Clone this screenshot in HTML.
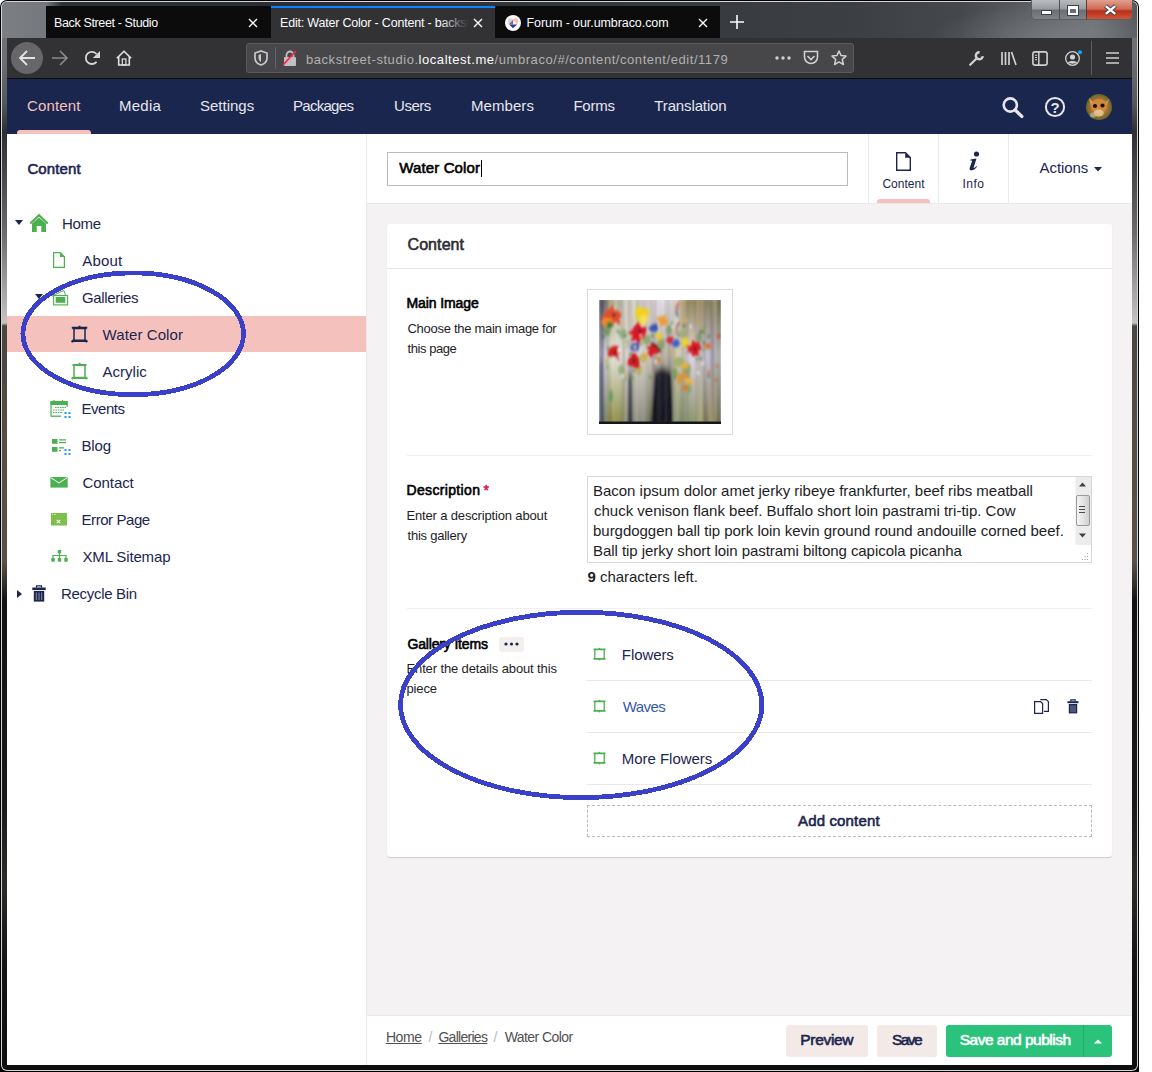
<!DOCTYPE html>
<html><head><meta charset="utf-8">
<style>
html,body{margin:0;padding:0;}
body{width:1152px;height:1072px;position:relative;overflow:hidden;background:#ffffff;font-family:"Liberation Sans",sans-serif;}
.a{position:absolute;}
.t{position:absolute;white-space:nowrap;line-height:1;font-family:"Liberation Sans",sans-serif;}
svg{position:absolute;overflow:visible;}
</style></head><body>
<!-- window frame -->
<div class="a" style="left:0;top:0;width:1139px;height:1072px;background:#000;border-radius:7px 7px 0 0;"></div>
<div class="a" style="left:1px;top:1px;width:1137px;height:1070px;background:#d4d5d8;border-radius:6px 6px 6px 6px;"></div>
<div class="a" style="left:2px;top:2px;width:1135px;height:1068px;border-radius:5px;background:linear-gradient(to bottom,#75787c 0,#6a6d71 60px,#55585c 100px,#2e2f33 130px,#6a6a6c 230px,#c4c4c4 321px,#4a4540 324px,#564d45 440px,#5a5048 560px,#121212 600px,#1a1918 800px,#2e2b27 880px,#141414 960px,#0e0e0e 1068px);"></div>
<!-- titlebar gradient -->
<div class="a" style="left:2px;top:2px;width:1135px;height:36px;border-radius:5px 5px 0 0;background:linear-gradient(to right,#7b7e82 0,#75787c 44px,#2c3037 60px,#2a2d33 300px,#383b40 720px,#3c3f44 850px,#45484c 960px,#5a5d61 1030px,#6c6f73 1090px,#55585c 1135px);"></div>
<div class="a" style="left:900px;top:2px;width:237px;height:36px;background:radial-gradient(ellipse 120px 40px at 150px 40px,rgba(150,152,156,0.45),rgba(150,152,156,0) 100%);"></div>
<!-- window buttons -->
<div class="a" style="left:1031px;top:0;width:102px;height:20px;border:1px solid #5b5e62;border-top:none;border-radius:0 0 5px 5px;box-sizing:border-box;background:linear-gradient(to bottom,#b9bbbf 0,#9a9da1 45%,#6c6f74 55%,#7f8286 100%);overflow:hidden;">
  <div class="a" style="left:27px;top:0;width:1px;height:20px;background:#4e5155;"></div>
  <div class="a" style="left:54px;top:0;width:47px;height:20px;background:linear-gradient(to bottom,#e0a090 0,#cf6a52 45%,#b7301a 55%,#d45a3c 100%);"></div>
  <div class="a" style="left:54px;top:0;width:1px;height:20px;background:#5a3a34;"></div>
</div>
<div class="a" style="left:1041px;top:10px;width:9px;height:3px;background:#fff;border:1px solid #3e4148;"></div>
<div class="a" style="left:1068px;top:6px;width:6px;height:4px;border:2px solid #fff;border-top-width:3px;outline:1px solid #3e4148;background:#6a6d72;"></div>
<svg style="left:1104px;top:5px" width="13" height="10" viewBox="0 0 13 10"><path d="M1.5 0.8 L11.5 9.2 M11.5 0.8 L1.5 9.2" stroke="#3e4148" stroke-width="4.2"/><path d="M1.8 1.1 L11.2 8.9 M11.2 1.1 L1.8 8.9" stroke="#fff" stroke-width="2.4"/></svg>

<!-- tab strip -->
<div class="a" style="left:46px;top:6px;width:674px;height:32px;background:#0c0c0d;"></div>
<div class="a" style="left:271px;top:6px;width:224px;height:32px;background:#323234;"></div>
<div class="a" style="left:271px;top:6px;width:224px;height:2px;background:#0a84ff;"></div>
<svg style="left:248px;top:18px" width="10" height="10" viewBox="0 0 10 10"><path d="M1 1L9 9M9 1L1 9" stroke="#fbfbfe" stroke-width="1.4"/></svg>
<svg style="left:473px;top:18px" width="10" height="10" viewBox="0 0 10 10"><path d="M1 1L9 9M9 1L1 9" stroke="#fbfbfe" stroke-width="1.4"/></svg>
<svg style="left:698px;top:18px" width="10" height="10" viewBox="0 0 10 10"><path d="M1 1L9 9M9 1L1 9" stroke="#fbfbfe" stroke-width="1.4"/></svg>
<svg style="left:730px;top:15px" width="14" height="14" viewBox="0 0 14 14"><path d="M7 0V14M0 7H14" stroke="#fbfbfe" stroke-width="1.6"/></svg>
<!-- forum favicon -->
<svg style="left:505px;top:15px" width="16" height="16" viewBox="0 0 16 16"><circle cx="8" cy="8" r="8" fill="#fbfbfe"/><circle cx="5.8" cy="6.5" r="3" fill="#d4d4d6"/><circle cx="10.3" cy="6.3" r="3" fill="#f4c4bc"/><path d="M4 9.2L8.2 4.8V9.2Z" fill="#8a6a4a"/><path d="M8.2 4.8L11.5 9.2H8.2Z" fill="#f4f4f8"/><path d="M4 9.4H12.2L8 13.2Z" fill="#2a3aa8"/></svg>

<!-- toolbar -->
<div class="a" style="left:7px;top:38px;width:1125px;height:40px;background:#323234;"></div>
<div class="a" style="left:7px;top:78px;width:1125px;height:1px;background:#0c0c0d;"></div>
<svg style="left:11px;top:42px" width="32" height="32" viewBox="0 0 32 32"><circle cx="16" cy="16" r="16" fill="#67676a"/><path d="M9 16H24M16 9L9 16L16 23" stroke="#e2e2e4" stroke-width="1.8" fill="none"/></svg>
<svg style="left:52px;top:50px" width="16" height="16" viewBox="0 0 16 16"><path d="M0 8H15M8 1L15 8L8 15" stroke="#8a8a8c" stroke-width="1.6" fill="none"/></svg>
<svg style="left:84px;top:50px" width="17" height="17" viewBox="0 0 17 17"><path d="M12.6 4A6.1 6.1 0 1 0 12.6 11.8" stroke="#d6d6d8" stroke-width="1.8" fill="none"/><path d="M16 0.9V8.1H8.8Z" fill="#d6d6d8"/></svg>
<svg style="left:116px;top:50px" width="16" height="16" viewBox="0 0 16 16"><path d="M0.8 8.3L8 1.2L15.2 8.3" stroke="#e2e2e4" stroke-width="1.6" fill="none" stroke-linejoin="round"/><path d="M2.7 6.5V15H13.3V6.5" stroke="#e2e2e4" stroke-width="1.6" fill="none"/><rect x="6.3" y="9" width="3.6" height="6" stroke="#e2e2e4" stroke-width="1.2" fill="none"/></svg>
<!-- url bar -->
<div class="a" style="left:246px;top:43px;width:608px;height:30px;background:#474749;border:1px solid #5b5b5d;box-sizing:border-box;border-radius:3px;"></div>
<svg style="left:254px;top:50px" width="14" height="16" viewBox="0 0 14 16"><path d="M7 1L13 3V8C13 11.5 10 14 7 15C4 14 1 11.5 1 8V3Z" stroke="#c8c8ca" stroke-width="1.7" fill="none"/><path d="M7 4V12C5.5 11 4.5 9.5 4.5 8V5Z" fill="#c8c8ca"/></svg>
<div class="a" style="left:275px;top:47px;width:1px;height:22px;background:#5a6577;"></div>
<svg style="left:283px;top:50px" width="16" height="16" viewBox="0 0 16 16"><rect x="1" y="7" width="12" height="9" rx="1" fill="#c0c0c2"/><path d="M3.5 7V5A3.5 3.5 0 0 1 10.5 5V7" stroke="#c0c0c2" stroke-width="1.8" fill="none"/><path d="M0 15L13 1" stroke="#ff1f4b" stroke-width="1.8"/></svg>
<svg style="left:775px;top:55px" width="16" height="6" viewBox="0 0 16 6"><circle cx="2" cy="3" r="1.7" fill="#d0d0d2"/><circle cx="8" cy="3" r="1.7" fill="#d0d0d2"/><circle cx="14" cy="3" r="1.7" fill="#d0d0d2"/></svg>
<svg style="left:803px;top:50px" width="16" height="16" viewBox="0 0 16 16"><path d="M1.5 1.5H14.5V7A6.5 6.5 0 0 1 1.5 7Z" stroke="#d0d0d2" stroke-width="1.6" fill="none"/><path d="M4.5 6L8 9.5L11.5 6" stroke="#d0d0d2" stroke-width="1.6" fill="none"/></svg>
<svg style="left:831px;top:50px" width="16" height="16" viewBox="0 0 16 16"><path d="M8 1L10.1 5.6L15 6.1L11.3 9.4L12.4 14.5L8 11.9L3.6 14.5L4.7 9.4L1 6.1L5.9 5.6Z" stroke="#d0d0d2" stroke-width="1.5" fill="none" stroke-linejoin="round"/></svg>
<!-- right toolbar icons -->
<svg style="left:969px;top:51px" width="15" height="15" viewBox="0 0 15 15"><path d="M1.2 13.8L7.8 7.2" stroke="#d0d0d2" stroke-width="2.3" stroke-linecap="round"/><path d="M13.8 5.2A3.5 3.5 0 1 1 10.6 1.2" stroke="#d0d0d2" stroke-width="2.4" fill="none"/></svg>
<svg style="left:1001px;top:51px" width="16" height="15" viewBox="0 0 16 15"><path d="M1 1V14M4.5 1V14M8 1V14M10.5 1L15 14" stroke="#d0d0d2" stroke-width="1.7" fill="none"/></svg>
<svg style="left:1032px;top:51px" width="16" height="15" viewBox="0 0 16 15"><rect x="0.9" y="0.9" width="14.2" height="13.2" rx="2.2" stroke="#d0d0d2" stroke-width="1.6" fill="none"/><path d="M6.8 1V14" stroke="#d0d0d2" stroke-width="1.5"/><path d="M3 4.3H5M3 6.5H5M3 8.7H5" stroke="#d0d0d2" stroke-width="1"/></svg>
<svg style="left:1065px;top:51px" width="17" height="15" viewBox="0 0 17 15"><circle cx="7.5" cy="7.5" r="6.8" stroke="#d0d0d2" stroke-width="1.3" fill="none"/><circle cx="7.5" cy="6" r="2.6" fill="#d0d0d2"/><path d="M3 11.5C4 9.5 11 9.5 12 11.5C11 13 4 13 3 11.5Z" fill="#d0d0d2"/><circle cx="15" cy="1.2" r="2" fill="#0ea7ff"/></svg>
<div class="a" style="left:1091px;top:41px;width:1px;height:34px;background:#5e5e60;"></div>
<svg style="left:1106px;top:52px" width="13" height="12" viewBox="0 0 13 12"><path d="M0 1H13M0 6H13M0 11H13" stroke="#d0d0d2" stroke-width="1.7"/></svg>

<!-- umbraco header -->
<div class="a" style="left:7px;top:79px;width:1125px;height:55px;background:#1b264f;"></div>
<div class="a" style="left:17px;top:130px;width:74px;height:4px;background:#f5c1bc;border-radius:3px 3px 0 0;"></div>
<svg style="left:1002px;top:97px" width="22" height="21" viewBox="0 0 22 21"><circle cx="8.3" cy="8" r="6.6" stroke="#e6e6ec" stroke-width="2.6" fill="none"/><path d="M13.2 13L19.8 19.4" stroke="#e6e6ec" stroke-width="3.4" stroke-linecap="round"/></svg>
<svg style="left:1044px;top:97px" width="22" height="21" viewBox="0 0 22 21"><circle cx="11" cy="10" r="9.1" stroke="#e6e6ec" stroke-width="2" fill="none"/><text x="11" y="15.5" text-anchor="middle" font-family="Liberation Sans" font-weight="700" font-size="15" fill="#e6e6ec">?</text></svg>
<svg style="left:1086px;top:94px" width="26" height="26" viewBox="0 0 26 26"><defs><radialGradient id="av" cx="50%" cy="50%" r="55%"><stop offset="0" stop-color="#d89040"/><stop offset="0.55" stop-color="#b87030"/><stop offset="0.85" stop-color="#6a6a30"/><stop offset="1" stop-color="#4a6a30"/></radialGradient><filter id="avb"><feGaussianBlur stdDeviation="0.6"/></filter></defs><circle cx="13" cy="13" r="13" fill="url(#av)"/><g filter="url(#avb)"><path d="M3 4 L8 9 L5 12Z" fill="#e0a050"/><path d="M23 5 L18 9 L21 12Z" fill="#d09040"/><ellipse cx="13" cy="12" rx="8" ry="7" fill="#d08a3c"/><circle cx="9" cy="12" r="2.1" fill="#1a1008"/><circle cx="16.5" cy="11.5" r="2.1" fill="#1a1008"/><ellipse cx="12.8" cy="19" rx="5" ry="3.5" fill="#e8d0a0" opacity=".8"/><ellipse cx="7" cy="21" rx="3" ry="2.5" fill="#c8b890" opacity=".7"/></g></svg>

<!-- sidebar -->
<div class="a" style="left:7px;top:134px;width:359px;height:931px;background:#fff;"></div>
<div class="a" style="left:366px;top:134px;width:1px;height:931px;background:#e9e9eb;"></div>
<div class="a" style="left:7px;top:316px;width:359px;height:36px;background:#f5c1bc;"></div>
<!-- tree carets -->
<svg style="left:15px;top:220px" width="8" height="5" viewBox="0 0 8 5"><path d="M0 0H8L4 5Z" fill="#1b264f"/></svg>
<svg style="left:35px;top:294px" width="8" height="5" viewBox="0 0 8 5"><path d="M0 0H8L4 5Z" fill="#1b264f"/></svg>
<svg style="left:16.5px;top:589.5px" width="5" height="8" viewBox="0 0 5 8"><path d="M0 0V8L5 4Z" fill="#1b264f"/></svg>
<!-- home icon -->
<svg style="left:29px;top:214px" width="20" height="18" viewBox="0 0 20 18"><path d="M1.2 9.5L10 1.2L18.8 9.5" stroke="#4caf50" stroke-width="2" fill="none"/><path d="M3 9.5L10 3.6L17 9.5V18H12.3V12H7.7V18H3Z" fill="#4caf50"/></svg>
<!-- about doc -->
<svg style="left:53px;top:252px" width="12" height="16" viewBox="0 0 12 16"><path d="M0.6 0.6H7.3L11.4 4.7V15.4H0.6Z" stroke="#4caf50" stroke-width="1.2" fill="none"/><path d="M7 0.6V5H11.4Z" fill="#4caf50"/></svg>
<!-- galleries folder -->
<svg style="left:51px;top:289px" width="18" height="17" viewBox="0 0 18 17"><path d="M1 7L9 3L13 1.5L14.5 6" stroke="#4caf50" stroke-width="1" fill="none"/><rect x="2.6" y="6.5" width="14" height="9.4" stroke="#4caf50" stroke-width="1.1" fill="#fff"/><rect x="4.7" y="8" width="9.6" height="5.8" fill="#4caf50"/></svg>
<!-- frame icons -->
<svg style="left:71px;top:325px" width="17" height="18" viewBox="0 0 17 18"><path d="M1.5 3H15.5M1.5 15.8H15.5" stroke="#1b264f" stroke-width="2.4"/><path d="M3 3V15.8M14 3V15.8" stroke="#1b264f" stroke-width="1.5"/><rect x="7.5" y="0.8" width="2" height="2" fill="#1b264f"/><circle cx="1.6" cy="16.2" r="1.3" fill="#1b264f"/><circle cx="15.4" cy="16.2" r="1.3" fill="#1b264f"/><circle cx="1.6" cy="2.8" r="1" fill="#1b264f"/><circle cx="15.4" cy="2.8" r="1" fill="#1b264f"/></svg>
<svg style="left:71px;top:362px" width="17" height="18" viewBox="0 0 17 18"><path d="M1.5 3H15.5M1.5 15.8H15.5" stroke="#4caf50" stroke-width="2.2"/><path d="M3 3V15.8M14 3V15.8" stroke="#4caf50" stroke-width="1.5"/><rect x="7.5" y="0.8" width="2" height="2" fill="#4caf50"/><circle cx="1.6" cy="16.2" r="1.2" fill="#4caf50"/><circle cx="15.4" cy="16.2" r="1.2" fill="#4caf50"/></svg>
<!-- events -->
<svg style="left:50px;top:400px" width="22" height="19" viewBox="0 0 22 19"><rect x="0.5" y="1" width="17" height="4" fill="#4caf50"/><path d="M1 1V16.5M17.2 1V7" stroke="#4caf50" stroke-width="1.2"/><path d="M1 16.2H11" stroke="#4caf50" stroke-width="1.3"/><path d="M4 0V2.5M12.5 0V2.5" stroke="#4caf50" stroke-width="1.2"/><path d="M5 7.5H16M3 10H14M3 12.5H13" stroke="#4caf50" stroke-width="1.1" stroke-dasharray="1.6 0.8"/><rect x="14.5" y="12" width="2" height="2" fill="#2196f3"/><rect x="18.5" y="12" width="2" height="2" fill="#2196f3"/><rect x="14.5" y="16" width="2" height="2" fill="#2196f3"/><rect x="18.5" y="16" width="2" height="2" fill="#2196f3"/></svg>
<!-- blog -->
<svg style="left:50px;top:437px" width="22" height="19" viewBox="0 0 22 19"><rect x="2" y="2" width="5.5" height="4.8" fill="#4caf50"/><rect x="2" y="10" width="5.5" height="4.8" fill="#4caf50"/><path d="M9 2.8H16M9 5.6H16M9 10.8H14M9 13.6H11" stroke="#4caf50" stroke-width="1.3"/><rect x="14.5" y="12" width="2" height="2" fill="#2196f3"/><rect x="18.5" y="12" width="2" height="2" fill="#2196f3"/><rect x="14.5" y="16" width="2" height="2" fill="#2196f3"/><rect x="18.5" y="16" width="2" height="2" fill="#2196f3"/></svg>
<!-- contact -->
<svg style="left:50px;top:477px" width="18" height="11" viewBox="0 0 18 11"><rect x="0.4" y="0" width="17.3" height="10.6" fill="#4caf50"/><path d="M0.8 0.6L9 6L17.2 0.6" stroke="#fff" stroke-width="1" fill="none"/></svg>
<!-- error page -->
<svg style="left:51px;top:513px" width="16" height="13" viewBox="0 0 16 13"><rect x="0" y="0" width="16" height="12.5" fill="#7cbf4a"/><path d="M5.8 6.8L9.2 10.2M9.2 6.8L5.8 10.2" stroke="#fff" stroke-width="1.2"/><path d="M1 1.5H5" stroke="#e8f4dc" stroke-width="0.8" stroke-dasharray="1 0.6"/></svg>
<!-- sitemap -->
<svg style="left:51px;top:550px" width="17" height="12" viewBox="0 0 17 12"><rect x="6.8" y="0" width="3.4" height="3.2" fill="#4caf50"/><path d="M8.5 3V5.5M2 8V5.5H15V8M8.5 5.5V8" stroke="#4caf50" stroke-width="1.2" fill="none"/><rect x="0.3" y="8" width="3.4" height="3.7" fill="#4caf50"/><rect x="6.8" y="8" width="3.4" height="3.7" fill="#4caf50"/><rect x="13.3" y="8" width="3.4" height="3.7" fill="#4caf50"/></svg>
<!-- trash -->
<svg style="left:32px;top:585px" width="14" height="17" viewBox="0 0 14 17"><rect x="0.3" y="2.5" width="13.4" height="2.6" fill="#1b264f"/><path d="M4.5 2.5V0.8H9.5V2.5" stroke="#1b264f" stroke-width="1.3" fill="none"/><rect x="1.8" y="6" width="10.4" height="10.6" fill="#1b264f"/><path d="M4.3 7.5V15M7 7.5V15M9.7 7.5V15" stroke="#8a8fa8" stroke-width="1"/></svg>
<!-- ellipse 1 -->


<!-- editor -->
<div class="a" style="left:367px;top:134px;width:765px;height:69px;background:#fff;"></div>
<div class="a" style="left:367px;top:203px;width:765px;height:1px;background:#e9e9eb;"></div>
<div class="a" style="left:367px;top:204px;width:765px;height:811px;background:#f4f2f3;"></div>
<div class="a" style="left:367px;top:1015px;width:765px;height:1px;background:#e9e9eb;"></div>
<div class="a" style="left:367px;top:1016px;width:765px;height:49px;background:#fff;"></div>
<!-- name input -->
<div class="a" style="left:387px;top:152px;width:461px;height:34px;border:1px solid #bbbabf;box-sizing:border-box;background:#fff;"></div>
<div class="a" style="left:481px;top:160px;width:1px;height:17px;background:#000;"></div>
<!-- tabs dividers -->
<div class="a" style="left:868px;top:134px;width:1px;height:69px;background:#e9e9eb;"></div>
<div class="a" style="left:938px;top:134px;width:1px;height:69px;background:#e9e9eb;"></div>
<div class="a" style="left:1008px;top:134px;width:1px;height:69px;background:#e9e9eb;"></div>
<div class="a" style="left:877px;top:199px;width:53px;height:4px;background:#f5c1bc;border-radius:3px 3px 0 0;"></div>
<svg style="left:896px;top:152px" width="15" height="19" viewBox="0 0 15 19"><path d="M0.7 0.7H9.5L14.3 5.5V18.3H0.7Z" stroke="#1b264f" stroke-width="1.4" fill="none"/><path d="M9.2 0.7V5.8H14.3Z" fill="#1b264f"/></svg>
<svg style="left:966px;top:151px" width="16" height="21" viewBox="0 0 16 21"><circle cx="10.5" cy="3" r="2.6" fill="#1b264f"/><path d="M4.5 8.5L10.5 7.5L7.5 17C8.5 17 9.5 16 10.5 15L11 15.8C9 18.5 6.5 19.8 4.5 19.3C3.3 19 3.5 17.5 4 16L6.2 9.8L4.3 9.6Z" fill="#1b264f"/></svg>
<svg style="left:1094px;top:167px" width="8" height="5" viewBox="0 0 8 5"><path d="M0 0H8L4 4.5Z" fill="#1b264f"/></svg>

<!-- panel -->
<div class="a" style="left:387px;top:224px;width:725px;height:633px;background:#fff;border-radius:3px;box-shadow:0 1px 1px rgba(0,0,0,0.16);"></div>
<div class="a" style="left:387px;top:268px;width:725px;height:1px;background:#e9e9eb;"></div>
<div class="a" style="left:407px;top:455px;width:685px;height:1px;background:#f0f0f2;"></div>
<div class="a" style="left:407px;top:608px;width:685px;height:1px;background:#f0f0f2;"></div>
<!-- image box -->
<div class="a" style="left:587px;top:289px;width:146px;height:146px;border:1px solid #dcdcdf;box-sizing:border-box;background:#fff;"></div>
<svg style="left:599px;top:300px;overflow:hidden" width="122" height="124" viewBox="0 0 122 124"><g><defs><filter id="vb" x="-5%" y="-5%" width="110%" height="110%"><feGaussianBlur stdDeviation="0.9 3"/></filter><filter id="sb"><feGaussianBlur stdDeviation="0.8 1.4"/></filter><linearGradient id="g0" x1="0" y1="0" x2="0" y2="1"><stop offset="0" stop-color="#4d4f59"/><stop offset="0.45" stop-color="#988da5"/><stop offset="1" stop-color="#576c74"/></linearGradient><linearGradient id="g1" x1="0" y1="0" x2="0" y2="1"><stop offset="0" stop-color="#494756"/><stop offset="0.45" stop-color="#9c9fb1"/><stop offset="1" stop-color="#3e4352"/></linearGradient><linearGradient id="g2" x1="0" y1="0" x2="0" y2="1"><stop offset="0" stop-color="#4a4859"/><stop offset="0.45" stop-color="#928ba7"/><stop offset="1" stop-color="#3e4d56"/></linearGradient><linearGradient id="g3" x1="0" y1="0" x2="0" y2="1"><stop offset="0" stop-color="#6e635b"/><stop offset="0.45" stop-color="#d9d4e4"/><stop offset="1" stop-color="#767c55"/></linearGradient><linearGradient id="g4" x1="0" y1="0" x2="0" y2="1"><stop offset="0" stop-color="#8c7c78"/><stop offset="0.45" stop-color="#b8aeba"/><stop offset="1" stop-color="#7b8663"/></linearGradient><linearGradient id="g5" x1="0" y1="0" x2="0" y2="1"><stop offset="0" stop-color="#847c6e"/><stop offset="0.45" stop-color="#c2c7c5"/><stop offset="1" stop-color="#808459"/></linearGradient><linearGradient id="g6" x1="0" y1="0" x2="0" y2="1"><stop offset="0" stop-color="#afa67c"/><stop offset="0.45" stop-color="#dcddc9"/><stop offset="1" stop-color="#767428"/></linearGradient><linearGradient id="g7" x1="0" y1="0" x2="0" y2="1"><stop offset="0" stop-color="#a49b6d"/><stop offset="0.45" stop-color="#e7eede"/><stop offset="1" stop-color="#979048"/></linearGradient><linearGradient id="g8" x1="0" y1="0" x2="0" y2="1"><stop offset="0" stop-color="#c1bb96"/><stop offset="0.45" stop-color="#dad6cd"/><stop offset="1" stop-color="#908f3e"/></linearGradient><linearGradient id="g9" x1="0" y1="0" x2="0" y2="1"><stop offset="0" stop-color="#bcbeb1"/><stop offset="0.45" stop-color="#f2edea"/><stop offset="1" stop-color="#8f8a44"/></linearGradient><linearGradient id="g10" x1="0" y1="0" x2="0" y2="1"><stop offset="0" stop-color="#a4a793"/><stop offset="0.45" stop-color="#dfe0df"/><stop offset="1" stop-color="#818a41"/></linearGradient><linearGradient id="g11" x1="0" y1="0" x2="0" y2="1"><stop offset="0" stop-color="#aca297"/><stop offset="0.45" stop-color="#e2e2d4"/><stop offset="1" stop-color="#7b7d38"/></linearGradient><linearGradient id="g12" x1="0" y1="0" x2="0" y2="1"><stop offset="0" stop-color="#aca495"/><stop offset="0.45" stop-color="#cac9bf"/><stop offset="1" stop-color="#857e3a"/></linearGradient><linearGradient id="g13" x1="0" y1="0" x2="0" y2="1"><stop offset="0" stop-color="#cbc9bd"/><stop offset="0.45" stop-color="#b6b6b0"/><stop offset="1" stop-color="#828268"/></linearGradient><linearGradient id="g14" x1="0" y1="0" x2="0" y2="1"><stop offset="0" stop-color="#d8d5ca"/><stop offset="0.45" stop-color="#eadbda"/><stop offset="1" stop-color="#99957d"/></linearGradient><linearGradient id="g15" x1="0" y1="0" x2="0" y2="1"><stop offset="0" stop-color="#c3bab4"/><stop offset="0.45" stop-color="#e2d8d3"/><stop offset="1" stop-color="#696d52"/></linearGradient><linearGradient id="g16" x1="0" y1="0" x2="0" y2="1"><stop offset="0" stop-color="#c2b5b2"/><stop offset="0.45" stop-color="#bdb2b4"/><stop offset="1" stop-color="#212528"/></linearGradient><linearGradient id="g17" x1="0" y1="0" x2="0" y2="1"><stop offset="0" stop-color="#bab3ab"/><stop offset="0.45" stop-color="#e0dddd"/><stop offset="1" stop-color="#342e3a"/></linearGradient><linearGradient id="g18" x1="0" y1="0" x2="0" y2="1"><stop offset="0" stop-color="#c8c4bd"/><stop offset="0.45" stop-color="#bbb6bc"/><stop offset="1" stop-color="#362f3e"/></linearGradient><linearGradient id="g19" x1="0" y1="0" x2="0" y2="1"><stop offset="0" stop-color="#c5c4c5"/><stop offset="0.45" stop-color="#cdd2cb"/><stop offset="1" stop-color="#231f27"/></linearGradient><linearGradient id="g20" x1="0" y1="0" x2="0" y2="1"><stop offset="0" stop-color="#dcdccd"/><stop offset="0.45" stop-color="#cbcebd"/><stop offset="1" stop-color="#979b84"/></linearGradient><linearGradient id="g21" x1="0" y1="0" x2="0" y2="1"><stop offset="0" stop-color="#d7d9d0"/><stop offset="0.45" stop-color="#d4c7c2"/><stop offset="1" stop-color="#7e836f"/></linearGradient><linearGradient id="g22" x1="0" y1="0" x2="0" y2="1"><stop offset="0" stop-color="#adb5a1"/><stop offset="0.45" stop-color="#ded9d9"/><stop offset="1" stop-color="#989a8c"/></linearGradient><linearGradient id="g23" x1="0" y1="0" x2="0" y2="1"><stop offset="0" stop-color="#c4c2b4"/><stop offset="0.45" stop-color="#d1c9c3"/><stop offset="1" stop-color="#818370"/></linearGradient><linearGradient id="g24" x1="0" y1="0" x2="0" y2="1"><stop offset="0" stop-color="#d4cbc6"/><stop offset="0.45" stop-color="#e6ebda"/><stop offset="1" stop-color="#91907e"/></linearGradient><linearGradient id="g25" x1="0" y1="0" x2="0" y2="1"><stop offset="0" stop-color="#bcbcca"/><stop offset="0.45" stop-color="#ddd5d4"/><stop offset="1" stop-color="#76756a"/></linearGradient><linearGradient id="g26" x1="0" y1="0" x2="0" y2="1"><stop offset="0" stop-color="#a8a4aa"/><stop offset="0.45" stop-color="#c2bcb5"/><stop offset="1" stop-color="#818878"/></linearGradient><linearGradient id="g27" x1="0" y1="0" x2="0" y2="1"><stop offset="0" stop-color="#cbc4d2"/><stop offset="0.45" stop-color="#d5cfc3"/><stop offset="1" stop-color="#80877a"/></linearGradient><linearGradient id="g28" x1="0" y1="0" x2="0" y2="1"><stop offset="0" stop-color="#bab6bb"/><stop offset="0.45" stop-color="#c3c0b8"/><stop offset="1" stop-color="#716e5a"/></linearGradient><linearGradient id="g29" x1="0" y1="0" x2="0" y2="1"><stop offset="0" stop-color="#dcd4ce"/><stop offset="0.45" stop-color="#c9c8b7"/><stop offset="1" stop-color="#73755f"/></linearGradient><linearGradient id="g30" x1="0" y1="0" x2="0" y2="1"><stop offset="0" stop-color="#c5c1b5"/><stop offset="0.45" stop-color="#d4c6bd"/><stop offset="1" stop-color="#58583e"/></linearGradient><linearGradient id="g31" x1="0" y1="0" x2="0" y2="1"><stop offset="0" stop-color="#d0ced8"/><stop offset="0.45" stop-color="#ab9f98"/><stop offset="1" stop-color="#2f2f37"/></linearGradient><linearGradient id="g32" x1="0" y1="0" x2="0" y2="1"><stop offset="0" stop-color="#cec2cd"/><stop offset="0.45" stop-color="#aca4a4"/><stop offset="1" stop-color="#0a0912"/></linearGradient><linearGradient id="g33" x1="0" y1="0" x2="0" y2="1"><stop offset="0" stop-color="#cbc5d1"/><stop offset="0.45" stop-color="#c5c0af"/><stop offset="1" stop-color="#2c2f38"/></linearGradient><linearGradient id="g34" x1="0" y1="0" x2="0" y2="1"><stop offset="0" stop-color="#e6dded"/><stop offset="0.45" stop-color="#c1c1b0"/><stop offset="1" stop-color="#1a1e21"/></linearGradient><linearGradient id="g35" x1="0" y1="0" x2="0" y2="1"><stop offset="0" stop-color="#e1d9ea"/><stop offset="0.45" stop-color="#b1a89e"/><stop offset="1" stop-color="#2a322f"/></linearGradient><linearGradient id="g36" x1="0" y1="0" x2="0" y2="1"><stop offset="0" stop-color="#f3eaef"/><stop offset="0.45" stop-color="#aeaf9f"/><stop offset="1" stop-color="#08090c"/></linearGradient><linearGradient id="g37" x1="0" y1="0" x2="0" y2="1"><stop offset="0" stop-color="#d5ccd6"/><stop offset="0.45" stop-color="#bab7a8"/><stop offset="1" stop-color="#171325"/></linearGradient><linearGradient id="g38" x1="0" y1="0" x2="0" y2="1"><stop offset="0" stop-color="#c6c5cc"/><stop offset="0.45" stop-color="#c3b4ae"/><stop offset="1" stop-color="#191a1d"/></linearGradient><linearGradient id="g39" x1="0" y1="0" x2="0" y2="1"><stop offset="0" stop-color="#c5cccb"/><stop offset="0.45" stop-color="#a3a296"/><stop offset="1" stop-color="#0a000a"/></linearGradient><linearGradient id="g40" x1="0" y1="0" x2="0" y2="1"><stop offset="0" stop-color="#e5dbe5"/><stop offset="0.45" stop-color="#ada99e"/><stop offset="1" stop-color="#262024"/></linearGradient><linearGradient id="g41" x1="0" y1="0" x2="0" y2="1"><stop offset="0" stop-color="#cfcac9"/><stop offset="0.45" stop-color="#b8b7a7"/><stop offset="1" stop-color="#253030"/></linearGradient><linearGradient id="g42" x1="0" y1="0" x2="0" y2="1"><stop offset="0" stop-color="#e5dfd6"/><stop offset="0.45" stop-color="#baab90"/><stop offset="1" stop-color="#969b7f"/></linearGradient><linearGradient id="g43" x1="0" y1="0" x2="0" y2="1"><stop offset="0" stop-color="#c6c5b1"/><stop offset="0.45" stop-color="#b5af8b"/><stop offset="1" stop-color="#7b8368"/></linearGradient><linearGradient id="g44" x1="0" y1="0" x2="0" y2="1"><stop offset="0" stop-color="#e9dcd1"/><stop offset="0.45" stop-color="#d0caa2"/><stop offset="1" stop-color="#839164"/></linearGradient><linearGradient id="g45" x1="0" y1="0" x2="0" y2="1"><stop offset="0" stop-color="#bebab9"/><stop offset="0.45" stop-color="#d4c7ac"/><stop offset="1" stop-color="#8e9972"/></linearGradient><linearGradient id="g46" x1="0" y1="0" x2="0" y2="1"><stop offset="0" stop-color="#bdae7c"/><stop offset="0.45" stop-color="#d0cfbf"/><stop offset="1" stop-color="#737e5f"/></linearGradient><linearGradient id="g47" x1="0" y1="0" x2="0" y2="1"><stop offset="0" stop-color="#aa9567"/><stop offset="0.45" stop-color="#adaea7"/><stop offset="1" stop-color="#767f56"/></linearGradient><linearGradient id="g48" x1="0" y1="0" x2="0" y2="1"><stop offset="0" stop-color="#bcae80"/><stop offset="0.45" stop-color="#c7b9b9"/><stop offset="1" stop-color="#72865a"/></linearGradient><linearGradient id="g49" x1="0" y1="0" x2="0" y2="1"><stop offset="0" stop-color="#a48d61"/><stop offset="0.45" stop-color="#c8c3b8"/><stop offset="1" stop-color="#6f8058"/></linearGradient><linearGradient id="g50" x1="0" y1="0" x2="0" y2="1"><stop offset="0" stop-color="#978c5d"/><stop offset="0.45" stop-color="#b8ada9"/><stop offset="1" stop-color="#8c9977"/></linearGradient><linearGradient id="g51" x1="0" y1="0" x2="0" y2="1"><stop offset="0" stop-color="#857243"/><stop offset="0.45" stop-color="#d6c9d7"/><stop offset="1" stop-color="#5a6744"/></linearGradient><linearGradient id="g52" x1="0" y1="0" x2="0" y2="1"><stop offset="0" stop-color="#8a794d"/><stop offset="0.45" stop-color="#c7c4cd"/><stop offset="1" stop-color="#819464"/></linearGradient><linearGradient id="g53" x1="0" y1="0" x2="0" y2="1"><stop offset="0" stop-color="#89804e"/><stop offset="0.45" stop-color="#dfd9ec"/><stop offset="1" stop-color="#7f8864"/></linearGradient><linearGradient id="g54" x1="0" y1="0" x2="0" y2="1"><stop offset="0" stop-color="#8c804c"/><stop offset="0.45" stop-color="#e4d4e6"/><stop offset="1" stop-color="#869268"/></linearGradient><linearGradient id="g55" x1="0" y1="0" x2="0" y2="1"><stop offset="0" stop-color="#73653b"/><stop offset="0.45" stop-color="#c9bdca"/><stop offset="1" stop-color="#918965"/></linearGradient><linearGradient id="g56" x1="0" y1="0" x2="0" y2="1"><stop offset="0" stop-color="#9e925f"/><stop offset="0.45" stop-color="#bfb3c2"/><stop offset="1" stop-color="#7c794b"/></linearGradient><linearGradient id="g57" x1="0" y1="0" x2="0" y2="1"><stop offset="0" stop-color="#a08b69"/><stop offset="0.45" stop-color="#bebebb"/><stop offset="1" stop-color="#80885b"/></linearGradient><linearGradient id="g58" x1="0" y1="0" x2="0" y2="1"><stop offset="0" stop-color="#877849"/><stop offset="0.45" stop-color="#c1b4c2"/><stop offset="1" stop-color="#9ca46a"/></linearGradient><linearGradient id="g59" x1="0" y1="0" x2="0" y2="1"><stop offset="0" stop-color="#a08b5d"/><stop offset="0.45" stop-color="#c4bfc6"/><stop offset="1" stop-color="#a1a16c"/></linearGradient><linearGradient id="g60" x1="0" y1="0" x2="0" y2="1"><stop offset="0" stop-color="#867c5f"/><stop offset="0.45" stop-color="#b2abbd"/><stop offset="1" stop-color="#746c49"/></linearGradient><linearGradient id="g61" x1="0" y1="0" x2="0" y2="1"><stop offset="0" stop-color="#7d724a"/><stop offset="0.45" stop-color="#ccc8d9"/><stop offset="1" stop-color="#726d44"/></linearGradient><linearGradient id="g62" x1="0" y1="0" x2="0" y2="1"><stop offset="0" stop-color="#7e7a59"/><stop offset="0.45" stop-color="#b4afb8"/><stop offset="1" stop-color="#7e7e52"/></linearGradient><linearGradient id="g63" x1="0" y1="0" x2="0" y2="1"><stop offset="0" stop-color="#676841"/><stop offset="0.45" stop-color="#bdb6c9"/><stop offset="1" stop-color="#938f62"/></linearGradient><linearGradient id="g64" x1="0" y1="0" x2="0" y2="1"><stop offset="0" stop-color="#897d58"/><stop offset="0.45" stop-color="#9791a4"/><stop offset="1" stop-color="#999161"/></linearGradient><linearGradient id="g65" x1="0" y1="0" x2="0" y2="1"><stop offset="0" stop-color="#938863"/><stop offset="0.45" stop-color="#a097a8"/><stop offset="1" stop-color="#82764a"/></linearGradient><linearGradient id="g66" x1="0" y1="0" x2="0" y2="1"><stop offset="0" stop-color="#8a7f57"/><stop offset="0.45" stop-color="#b3b2b6"/><stop offset="1" stop-color="#84834d"/></linearGradient><linearGradient id="g67" x1="0" y1="0" x2="0" y2="1"><stop offset="0" stop-color="#86795f"/><stop offset="0.45" stop-color="#b0a4b1"/><stop offset="1" stop-color="#7e7948"/></linearGradient><linearGradient id="g68" x1="0" y1="0" x2="0" y2="1"><stop offset="0" stop-color="#97855b"/><stop offset="0.45" stop-color="#c2c0cc"/><stop offset="1" stop-color="#7f6e3f"/></linearGradient><linearGradient id="g69" x1="0" y1="0" x2="0" y2="1"><stop offset="0" stop-color="#636442"/><stop offset="0.45" stop-color="#a9ac9d"/><stop offset="1" stop-color="#64644f"/></linearGradient><linearGradient id="g70" x1="0" y1="0" x2="0" y2="1"><stop offset="0" stop-color="#57553d"/><stop offset="0.45" stop-color="#a9aba7"/><stop offset="1" stop-color="#52553c"/></linearGradient></defs><g filter="url(#vb)"><rect x="0" y="-4" width="2.3" height="132" fill="url(#g0)"/><rect x="2" y="-4" width="1.3" height="132" fill="url(#g1)"/><rect x="3" y="-4" width="2.3" height="132" fill="url(#g2)"/><rect x="5" y="-4" width="3.3" height="132" fill="url(#g3)"/><rect x="8" y="-4" width="1.3" height="132" fill="url(#g4)"/><rect x="9" y="-4" width="1.3" height="132" fill="url(#g5)"/><rect x="10" y="-4" width="3.3" height="132" fill="url(#g6)"/><rect x="13" y="-4" width="2.3" height="132" fill="url(#g7)"/><rect x="15" y="-4" width="2.3" height="132" fill="url(#g8)"/><rect x="17" y="-4" width="1.3" height="132" fill="url(#g9)"/><rect x="18" y="-4" width="2.8" height="132" fill="url(#g10)"/><rect x="20.5" y="-4" width="2.8" height="132" fill="url(#g11)"/><rect x="23.0" y="-4" width="1.3" height="132" fill="url(#g12)"/><rect x="24" y="-4" width="2.8" height="132" fill="url(#g13)"/><rect x="26.5" y="-4" width="1.8" height="132" fill="url(#g14)"/><rect x="28.0" y="-4" width="1.3" height="132" fill="url(#g15)"/><rect x="29" y="-4" width="1.3" height="132" fill="url(#g16)"/><rect x="30" y="-4" width="1.3" height="132" fill="url(#g17)"/><rect x="31" y="-4" width="2.8" height="132" fill="url(#g18)"/><rect x="33.5" y="-4" width="0.8" height="132" fill="url(#g19)"/><rect x="34" y="-4" width="1.3" height="132" fill="url(#g20)"/><rect x="35" y="-4" width="2.3" height="132" fill="url(#g21)"/><rect x="37" y="-4" width="2.3" height="132" fill="url(#g22)"/><rect x="39" y="-4" width="2.3" height="132" fill="url(#g23)"/><rect x="41" y="-4" width="1.3" height="132" fill="url(#g24)"/><rect x="42" y="-4" width="1.8" height="132" fill="url(#g25)"/><rect x="43.5" y="-4" width="1.3" height="132" fill="url(#g26)"/><rect x="44.5" y="-4" width="2.8" height="132" fill="url(#g27)"/><rect x="47.0" y="-4" width="1.3" height="132" fill="url(#g28)"/><rect x="48" y="-4" width="2.3" height="132" fill="url(#g29)"/><rect x="50" y="-4" width="3.3" height="132" fill="url(#g30)"/><rect x="53" y="-4" width="1.8" height="132" fill="url(#g31)"/><rect x="54.5" y="-4" width="2.8" height="132" fill="url(#g32)"/><rect x="57.0" y="-4" width="1.3" height="132" fill="url(#g33)"/><rect x="58.0" y="-4" width="3.3" height="132" fill="url(#g34)"/><rect x="61.0" y="-4" width="2.8" height="132" fill="url(#g35)"/><rect x="63.5" y="-4" width="1.8" height="132" fill="url(#g36)"/><rect x="65.0" y="-4" width="1.8" height="132" fill="url(#g37)"/><rect x="66.5" y="-4" width="2.3" height="132" fill="url(#g38)"/><rect x="68.5" y="-4" width="3.3" height="132" fill="url(#g39)"/><rect x="71.5" y="-4" width="1.8" height="132" fill="url(#g40)"/><rect x="73.0" y="-4" width="1.3" height="132" fill="url(#g41)"/><rect x="74" y="-4" width="1.3" height="132" fill="url(#g42)"/><rect x="75" y="-4" width="1.8" height="132" fill="url(#g43)"/><rect x="76.5" y="-4" width="2.3" height="132" fill="url(#g44)"/><rect x="78.5" y="-4" width="1.8" height="132" fill="url(#g45)"/><rect x="80" y="-4" width="2.8" height="132" fill="url(#g46)"/><rect x="82.5" y="-4" width="1.8" height="132" fill="url(#g47)"/><rect x="84.0" y="-4" width="1.3" height="132" fill="url(#g48)"/><rect x="85.0" y="-4" width="1.8" height="132" fill="url(#g49)"/><rect x="86.5" y="-4" width="1.8" height="132" fill="url(#g50)"/><rect x="88" y="-4" width="1.3" height="132" fill="url(#g51)"/><rect x="89" y="-4" width="1.8" height="132" fill="url(#g52)"/><rect x="90.5" y="-4" width="2.8" height="132" fill="url(#g53)"/><rect x="93.0" y="-4" width="3.3" height="132" fill="url(#g54)"/><rect x="96" y="-4" width="1.8" height="132" fill="url(#g55)"/><rect x="97.5" y="-4" width="1.3" height="132" fill="url(#g56)"/><rect x="98.5" y="-4" width="1.3" height="132" fill="url(#g57)"/><rect x="99.5" y="-4" width="1.8" height="132" fill="url(#g58)"/><rect x="101.0" y="-4" width="3.3" height="132" fill="url(#g59)"/><rect x="104" y="-4" width="3.3" height="132" fill="url(#g60)"/><rect x="107" y="-4" width="2.8" height="132" fill="url(#g61)"/><rect x="109.5" y="-4" width="1.3" height="132" fill="url(#g62)"/><rect x="110.5" y="-4" width="1.8" height="132" fill="url(#g63)"/><rect x="112" y="-4" width="2.3" height="132" fill="url(#g64)"/><rect x="114" y="-4" width="1.8" height="132" fill="url(#g65)"/><rect x="115.5" y="-4" width="1.3" height="132" fill="url(#g66)"/><rect x="116.5" y="-4" width="1.3" height="132" fill="url(#g67)"/><rect x="117.5" y="-4" width="0.8" height="132" fill="url(#g68)"/><rect x="118" y="-4" width="2.8" height="132" fill="url(#g69)"/><rect x="120.5" y="-4" width="1.8" height="132" fill="url(#g70)"/><path d="M55 90 L56 72 Q60 66 66 68 L72 72 L74 124 H52 Z" fill="#15151e" opacity="0.9"/><path d="M60 72 V124 M67 74 V124" stroke="#44425a" stroke-width="1.2" fill="none" opacity="0.6"/><path d="M31 74 V124" stroke="#3a3a4a" stroke-width="4" opacity="0.6"/><path d="M2 60 V124" stroke="#4a5468" stroke-width="4" opacity="0.5"/></g><g filter="url(#sb)"><ellipse cx="8" cy="30" rx="4" ry="6" fill="#4a8a40" opacity="0.55"/><ellipse cx="24" cy="34" rx="4" ry="5" fill="#6a9a50" opacity="0.55"/><ellipse cx="28" cy="44" rx="3" ry="4" fill="#90a860" opacity="0.55"/><ellipse cx="48" cy="40" rx="4" ry="5" fill="#5a9040" opacity="0.55"/><ellipse cx="62" cy="44" rx="4" ry="6" fill="#6a8a40" opacity="0.55"/><ellipse cx="70" cy="30" rx="3" ry="5" fill="#4a8a48" opacity="0.55"/><ellipse cx="84" cy="34" rx="4" ry="4" fill="#8aa860" opacity="0.55"/><ellipse cx="100" cy="38" rx="3" ry="5" fill="#5a9050" opacity="0.55"/><ellipse cx="44" cy="58" rx="4" ry="5" fill="#a0a840" opacity="0.55"/><ellipse cx="80" cy="62" rx="5" ry="5" fill="#7aa040" opacity="0.55"/><ellipse cx="88" cy="70" rx="4" ry="6" fill="#6a9040" opacity="0.55"/><ellipse cx="40" cy="70" rx="3" ry="6" fill="#a8a040" opacity="0.55"/><ellipse cx="22" cy="70" rx="3" ry="5" fill="#6a9a50" opacity="0.55"/><ellipse cx="76" cy="74" rx="3" ry="6" fill="#5a8a40" opacity="0.55"/><ellipse cx="90" cy="88" rx="3" ry="6" fill="#70a050" opacity="0.55"/><ellipse cx="12" cy="96" rx="2" ry="6" fill="#3a8a50" opacity="0.55"/><ellipse cx="74.9" cy="27.2" rx="1.2" ry="2" fill="#ffffff" opacity="0.7" transform="rotate(-40 74.9 27.2)"/><ellipse cx="12.0" cy="50.0" rx="1.2" ry="2" fill="#c8b030" opacity="0.7" transform="rotate(10 12.0 50.0)"/><ellipse cx="27.3" cy="74.4" rx="1.2" ry="2" fill="#c8b030" opacity="0.7" transform="rotate(-6 27.3 74.4)"/><ellipse cx="18.8" cy="31.5" rx="1.2" ry="2" fill="#3f8a3a" opacity="0.7" transform="rotate(-38 18.8 31.5)"/><ellipse cx="40.2" cy="25.5" rx="1.2" ry="2" fill="#5aa040" opacity="0.7" transform="rotate(-13 40.2 25.5)"/><ellipse cx="31.4" cy="54.2" rx="1.2" ry="2" fill="#3f8a3a" opacity="0.7" transform="rotate(35 31.4 54.2)"/><ellipse cx="96.3" cy="43.0" rx="1.2" ry="2" fill="#ffffff" opacity="0.7" transform="rotate(7 96.3 43.0)"/><ellipse cx="26.3" cy="36.2" rx="1.2" ry="2" fill="#3f8a3a" opacity="0.7" transform="rotate(3 26.3 36.2)"/><ellipse cx="33.4" cy="78.1" rx="1.2" ry="2" fill="#5aa040" opacity="0.7" transform="rotate(27 33.4 78.1)"/><ellipse cx="57.4" cy="57.8" rx="1.2" ry="2" fill="#5aa040" opacity="0.7" transform="rotate(-49 57.4 57.8)"/><ellipse cx="32.7" cy="34.9" rx="1.2" ry="2" fill="#c8b030" opacity="0.7" transform="rotate(22 32.7 34.9)"/><ellipse cx="51.3" cy="77.2" rx="1.2" ry="2" fill="#3f8a3a" opacity="0.7" transform="rotate(-44 51.3 77.2)"/><ellipse cx="7.4" cy="62.6" rx="1.2" ry="2" fill="#c8b030" opacity="0.7" transform="rotate(15 7.4 62.6)"/><ellipse cx="55.9" cy="24.4" rx="1.2" ry="2" fill="#e0c840" opacity="0.7" transform="rotate(49 55.9 24.4)"/><ellipse cx="53.6" cy="46.9" rx="1.2" ry="2" fill="#3f8a3a" opacity="0.7" transform="rotate(-32 53.6 46.9)"/><ellipse cx="20.4" cy="51.3" rx="1.2" ry="2" fill="#ffffff" opacity="0.7" transform="rotate(-47 20.4 51.3)"/><ellipse cx="103.8" cy="63.3" rx="1.2" ry="2" fill="#ffffff" opacity="0.7" transform="rotate(48 103.8 63.3)"/><ellipse cx="85.1" cy="47.4" rx="1.2" ry="2" fill="#e0c840" opacity="0.7" transform="rotate(39 85.1 47.4)"/><ellipse cx="8.2" cy="66.9" rx="1.2" ry="2" fill="#5aa040" opacity="0.7" transform="rotate(12 8.2 66.9)"/><ellipse cx="101.5" cy="58.7" rx="1.2" ry="2" fill="#2a6a30" opacity="0.7" transform="rotate(-44 101.5 58.7)"/><ellipse cx="70.4" cy="51.7" rx="1.2" ry="2" fill="#c8b030" opacity="0.7" transform="rotate(29 70.4 51.7)"/><ellipse cx="85.0" cy="26.0" rx="1.2" ry="2" fill="#2a6a30" opacity="0.7" transform="rotate(7 85.0 26.0)"/><ellipse cx="104.0" cy="31.5" rx="1.2" ry="2" fill="#2a6a30" opacity="0.7" transform="rotate(-32 104.0 31.5)"/><ellipse cx="87.8" cy="20.1" rx="1.2" ry="2" fill="#e0c840" opacity="0.7" transform="rotate(-22 87.8 20.1)"/><ellipse cx="109.6" cy="36.7" rx="1.2" ry="2" fill="#2a6a30" opacity="0.7" transform="rotate(22 109.6 36.7)"/><ellipse cx="93.0" cy="34.5" rx="1.2" ry="2" fill="#e0c840" opacity="0.7" transform="rotate(-30 93.0 34.5)"/><ellipse cx="62.0" cy="21.8" rx="1.2" ry="2" fill="#c8b030" opacity="0.7" transform="rotate(30 62.0 21.8)"/><ellipse cx="72.9" cy="23.3" rx="1.2" ry="2" fill="#5aa040" opacity="0.7" transform="rotate(3 72.9 23.3)"/><ellipse cx="97.8" cy="58.8" rx="1.2" ry="2" fill="#3f8a3a" opacity="0.7" transform="rotate(-28 97.8 58.8)"/><ellipse cx="28.2" cy="45.5" rx="1.2" ry="2" fill="#2a6a30" opacity="0.7" transform="rotate(-31 28.2 45.5)"/><ellipse cx="56.3" cy="61.7" rx="1.2" ry="2" fill="#ffffff" opacity="0.7" transform="rotate(-7 56.3 61.7)"/><ellipse cx="42.4" cy="43.8" rx="1.2" ry="2" fill="#3f8a3a" opacity="0.7" transform="rotate(42 42.4 43.8)"/><ellipse cx="35.0" cy="70.7" rx="1.2" ry="2" fill="#3f8a3a" opacity="0.7" transform="rotate(-34 35.0 70.7)"/><ellipse cx="56.5" cy="32.0" rx="1.2" ry="2" fill="#5aa040" opacity="0.7" transform="rotate(-31 56.5 32.0)"/><ellipse cx="53.3" cy="35.9" rx="1.2" ry="2" fill="#2a6a30" opacity="0.7" transform="rotate(-47 53.3 35.9)"/><ellipse cx="104.9" cy="49.7" rx="1.2" ry="2" fill="#5aa040" opacity="0.7" transform="rotate(54 104.9 49.7)"/><ellipse cx="27.7" cy="45.0" rx="1.2" ry="2" fill="#ffffff" opacity="0.7" transform="rotate(-53 27.7 45.0)"/><ellipse cx="104.6" cy="28.8" rx="1.2" ry="2" fill="#c8b030" opacity="0.7" transform="rotate(-54 104.6 28.8)"/><ellipse cx="26.6" cy="78.4" rx="1.2" ry="2" fill="#5aa040" opacity="0.7" transform="rotate(-7 26.6 78.4)"/><ellipse cx="9.5" cy="23.6" rx="1.2" ry="2" fill="#c8b030" opacity="0.7" transform="rotate(-3 9.5 23.6)"/><ellipse cx="99.2" cy="73.0" rx="1.2" ry="2" fill="#ffffff" opacity="0.7" transform="rotate(-46 99.2 73.0)"/><ellipse cx="109.7" cy="75.9" rx="1.2" ry="2" fill="#2a6a30" opacity="0.7" transform="rotate(-36 109.7 75.9)"/><ellipse cx="23.7" cy="76.2" rx="1.2" ry="2" fill="#ffffff" opacity="0.7" transform="rotate(-1 23.7 76.2)"/><ellipse cx="7.4" cy="59.9" rx="1.2" ry="2" fill="#c8b030" opacity="0.7" transform="rotate(47 7.4 59.9)"/><ellipse cx="43.6" cy="39.9" rx="1.2" ry="2" fill="#5aa040" opacity="0.7" transform="rotate(-47 43.6 39.9)"/><ellipse cx="4.3" cy="36.8" rx="1.2" ry="2" fill="#2a6a30" opacity="0.7" transform="rotate(-7 4.3 36.8)"/><ellipse cx="105.3" cy="27.4" rx="1.2" ry="2" fill="#5aa040" opacity="0.7" transform="rotate(-12 105.3 27.4)"/><ellipse cx="41.8" cy="69.3" rx="1.2" ry="2" fill="#c8b030" opacity="0.7" transform="rotate(-49 41.8 69.3)"/><ellipse cx="9.2" cy="48.4" rx="1.2" ry="2" fill="#2a6a30" opacity="0.7" transform="rotate(9 9.2 48.4)"/><ellipse cx="101.5" cy="31.6" rx="1.2" ry="2" fill="#2a6a30" opacity="0.7" transform="rotate(34 101.5 31.6)"/><ellipse cx="99.1" cy="21.8" rx="1.2" ry="2" fill="#c8b030" opacity="0.7" transform="rotate(-29 99.1 21.8)"/><ellipse cx="90.1" cy="66.0" rx="1.2" ry="2" fill="#3f8a3a" opacity="0.7" transform="rotate(-12 90.1 66.0)"/><ellipse cx="7.7" cy="23.8" rx="1.2" ry="2" fill="#3f8a3a" opacity="0.7" transform="rotate(-28 7.7 23.8)"/><ellipse cx="24.7" cy="23.8" rx="1.2" ry="2" fill="#e0c840" opacity="0.7" transform="rotate(-17 24.7 23.8)"/><ellipse cx="42.5" cy="40.1" rx="1.2" ry="2" fill="#e0c840" opacity="0.7" transform="rotate(-55 42.5 40.1)"/><ellipse cx="31.8" cy="63.0" rx="1.2" ry="2" fill="#2a6a30" opacity="0.7" transform="rotate(58 31.8 63.0)"/><ellipse cx="33.2" cy="20.2" rx="1.2" ry="2" fill="#e0c840" opacity="0.7" transform="rotate(57 33.2 20.2)"/><ellipse cx="89.4" cy="76.8" rx="1.2" ry="2" fill="#3f8a3a" opacity="0.7" transform="rotate(-57 89.4 76.8)"/><ellipse cx="91.6" cy="26.4" rx="1.2" ry="2" fill="#ffffff" opacity="0.7" transform="rotate(-1 91.6 26.4)"/><ellipse cx="105.1" cy="43.2" rx="1.2" ry="2" fill="#2a6a30" opacity="0.7" transform="rotate(56 105.1 43.2)"/><path d="M22.6 16.0 L20.1 19.0 L21.9 24.9 L15.4 21.8 L13.0 27.8 L9.6 24.2 L4.6 24.4 L4.7 19.4 L2.4 16.0 L6.6 13.3 L6.7 9.7 L10.3 9.4 L13.0 4.3 L15.2 10.6 L18.8 10.2 L21.2 12.6Z" fill="#e04e2a" opacity="1.0"/><path d="M14.1 22.0 L12.0 23.7 L11.2 25.7 L9.0 26.8 L6.3 26.7 L3.9 25.0 L1.6 22.0 L3.8 19.0 L6.4 17.5 L9.0 18.5 L11.3 18.1 L13.0 19.7Z" fill="#f0882c" opacity="1.0"/><circle cx="15" cy="15" r="1.6" fill="#241c18" opacity="1.0"/><path d="M14.9 25.0 L13.1 26.5 L11.9 27.8 L10.2 27.5 L8.0 27.2 L8.0 25.0 L7.7 22.6 L10.0 21.9 L12.2 21.3 L12.7 23.8Z" fill="#2f7a3a" opacity="1.0"/><path d="M51.6 14.0 L46.9 16.4 L47.2 20.5 L43.3 19.6 L40.0 22.9 L38.8 18.0 L35.9 16.9 L36.7 14.0 L36.3 11.3 L37.3 8.1 L40.1 5.8 L43.2 8.6 L46.7 8.1 L49.2 10.5Z" fill="#f2d01e" opacity="1.0"/><path d="M49.0 20.0 L46.6 21.9 L45.8 25.6 L42.7 24.0 L38.8 23.8 L41.0 20.0 L40.0 17.1 L42.6 15.6 L45.9 14.3 L47.9 17.2Z" fill="#f6e050" opacity="1.0"/><path d="M46.9 33.0 L46.0 35.5 L45.2 38.2 L42.3 38.6 L40.0 45.2 L37.0 40.1 L31.5 41.5 L33.7 35.6 L28.4 33.0 L33.4 30.3 L34.3 27.3 L36.7 25.1 L40.0 21.0 L42.2 27.8 L47.1 25.9 L47.3 30.0Z" fill="#d8182a" opacity="1.0"/><circle cx="41" cy="31" r="1.5" fill="#3a1010" opacity="1.0"/><circle cx="42" cy="36" r="1.3" fill="#f4d0d0" opacity="0.9"/><path d="M59.6 28.0 L58.4 30.0 L57.2 31.7 L55.0 31.5 L52.7 32.1 L51.1 30.3 L49.0 28.0 L51.9 26.2 L53.1 24.6 L55.0 24.2 L58.0 22.7 L58.0 26.3Z" fill="#3454b4" opacity="1.0"/><path d="M63.5 36.0 L62.1 37.5 L61.5 40.5 L59.0 39.0 L57.6 37.7 L57.6 36.0 L57.0 33.8 L59.0 33.0 L61.3 31.9 L61.9 34.6Z" fill="#f0d020" opacity="1.0"/><path d="M40.2 47.0 L39.8 49.2 L38.4 51.1 L36.0 50.7 L33.7 50.9 L31.7 49.5 L31.5 47.0 L32.4 44.9 L33.7 43.0 L36.0 43.1 L39.0 41.9 L40.3 44.5Z" fill="#3858c0" opacity="1.0"/><circle cx="36" cy="47" r="1.6" fill="#f0d040" opacity="1.0"/><path d="M22.8 53.0 L18.3 54.4 L21.0 61.7 L16.0 55.7 L14.2 56.2 L9.6 56.7 L8.7 53.0 L10.1 49.6 L12.4 46.8 L16.0 45.8 L19.8 46.4 L18.1 51.8Z" fill="#d21c22" opacity="1.0"/><circle cx="16" cy="53" r="1.2" fill="#2a1010" opacity="1.0"/><path d="M40.3 61.0 L40.5 63.7 L40.5 67.9 L36.7 68.4 L33.7 66.6 L31.0 66.0 L28.4 64.2 L29.1 61.0 L29.6 58.4 L31.9 57.1 L33.2 53.1 L36.7 53.5 L38.6 56.5 L40.3 58.5Z" fill="#cc1c24" opacity="1.0"/><circle cx="35" cy="61" r="1.4" fill="#401010" opacity="1.0"/><path d="M61.7 50.0 L59.8 52.8 L57.3 54.2 L54.9 53.8 L52.2 58.0 L50.0 55.0 L48.2 52.8 L50.3 50.0 L46.6 46.5 L51.1 46.3 L52.2 42.1 L55.2 44.7 L58.8 43.9 L57.6 48.2Z" fill="#d41e2a" opacity="1.0"/><path d="M49.5 56.0 L47.6 57.1 L46.9 58.7 L45.1 58.7 L43.1 58.1 L44.1 56.0 L44.0 54.5 L45.3 53.9 L46.9 53.1 L47.8 54.7Z" fill="#f0a030" opacity="0.9"/><path d="M52 43 Q58 46 62 52" stroke="#1c1c20" stroke-width="1.6" fill="none"/><path d="M74.5 40.0 L73.6 41.5 L73.6 44.4 L71.0 44.3 L69.4 42.8 L67.9 41.8 L65.8 40.0 L68.8 38.7 L68.3 35.3 L71.0 37.3 L73.4 35.9 L74.1 38.2Z" fill="#cc2a3a" opacity="1.0"/><path d="M82.2 43.0 L79.9 44.7 L79.3 47.0 L77.0 46.9 L74.7 47.0 L73.5 45.0 L72.4 43.0 L73.9 41.2 L75.3 40.0 L77.0 39.0 L79.4 38.9 L79.7 41.4Z" fill="#3a62c8" opacity="1.0"/><path d="M91.8 42.0 L89.9 44.3 L88.4 46.2 L86.0 45.2 L83.5 46.3 L83.4 43.5 L82.1 42.0 L82.8 40.1 L84.1 38.7 L86.0 38.3 L88.5 37.6 L88.5 40.6Z" fill="#f0d628" opacity="1.0"/><path d="M103.1 49.0 L99.0 50.9 L100.3 55.7 L96.5 55.6 L93.3 56.4 L92.3 52.4 L88.2 52.3 L89.6 49.0 L86.4 44.9 L92.1 45.4 L93.0 40.1 L96.7 41.7 L100.3 42.3 L101.2 46.0Z" fill="#d61c28" opacity="1.0"/><circle cx="96" cy="49" r="1.4" fill="#3a1010" opacity="1.0"/><path d="M68.5 20.0 L69.1 23.0 L67.0 25.2 L64.0 25.8 L60.0 26.9 L61.4 21.5 L56.6 20.0 L59.0 17.1 L62.0 16.6 L64.0 16.3 L67.6 13.7 L66.6 18.5Z" fill="#f09a2c" opacity="0.9"/><path d="M113.3 46.0 L110.9 47.4 L110.3 50.0 L108.3 48.0 L106.2 48.1 L105.6 46.0 L106.7 44.3 L108.3 43.8 L110.1 42.7 L111.0 44.6Z" fill="#e06a30" opacity="1.0"/><path d="M121.7 36.0 L121.2 36.9 L120.6 37.8 L119.3 38.2 L117.8 37.6 L117.7 36.0 L118.4 34.9 L119.3 33.9 L120.6 34.2 L121.5 34.9Z" fill="#e04040" opacity="1.0"/><path d="M63.2 60.0 L61.7 61.3 L61.1 63.5 L59.3 62.3 L57.5 61.8 L57.2 60.0 L58.1 58.7 L59.1 57.2 L61.0 56.9 L61.8 58.7Z" fill="#e08030" opacity="0.8"/><circle cx="79.1906824222644" cy="4.0" r="1.4" fill="#c05060" opacity="0.85"/><circle cx="77.50295913191134" cy="6.4" r="1.4" fill="#c05060" opacity="0.85"/><circle cx="78.3094420476614" cy="8.8" r="1.4" fill="#c05060" opacity="0.85"/><circle cx="77.32331540479181" cy="11.2" r="1.4" fill="#7a6aa0" opacity="0.85"/><circle cx="77.7691265115156" cy="13.6" r="1.4" fill="#3a70b0" opacity="0.85"/><circle cx="78.46149458717092" cy="16.0" r="1.4" fill="#7a6aa0" opacity="0.85"/><circle cx="77.18553360759688" cy="18.4" r="1.4" fill="#d0d8e0" opacity="0.85"/><circle cx="77.014610001745" cy="20.8" r="1.4" fill="#d0d8e0" opacity="0.85"/><circle cx="79.7138368983179" cy="23.2" r="1.4" fill="#c05060" opacity="0.85"/><circle cx="78.93215510254475" cy="25.599999999999998" r="1.4" fill="#7a6aa0" opacity="0.85"/><circle cx="76.88655004350439" cy="28.0" r="1.4" fill="#c05060" opacity="0.85"/><circle cx="78.46420820431763" cy="30.4" r="1.4" fill="#60a070" opacity="0.85"/><circle cx="77.67074786164397" cy="32.8" r="1.4" fill="#c05060" opacity="0.85"/><circle cx="79.58216980242062" cy="35.2" r="1.4" fill="#3a70b0" opacity="0.85"/><path d="M90.9 66.0 L89.2 67.8 L87.5 68.6 L86.0 67.8 L83.3 70.6 L83.7 67.3 L80.9 66.0 L83.0 64.3 L83.7 62.0 L86.0 63.4 L87.7 63.1 L88.5 64.6Z" fill="#f0b030" opacity="0.9"/><path d="M89.8 78.0 L84.2 79.3 L83.7 80.9 L82.0 83.2 L78.4 84.2 L78.7 79.9 L78.4 78.0 L79.8 76.7 L78.6 72.0 L82.0 75.0 L85.8 71.3 L87.1 75.1Z" fill="#e0902c" opacity="0.9"/><path d="M93.2 80.0 L93.9 82.2 L93.3 85.7 L90.0 83.8 L87.3 84.6 L86.7 81.9 L84.9 80.0 L87.0 78.3 L88.2 76.8 L90.0 78.0 L91.6 77.2 L91.8 79.0Z" fill="#f0b040" opacity="0.85"/><path d="M89.2 88.0 L88.0 89.5 L87.5 92.7 L85.3 90.3 L82.5 90.5 L82.6 88.0 L83.4 86.1 L85.1 85.2 L87.2 84.2 L88.7 86.0Z" fill="#d87a30" opacity="0.85"/><circle cx="110" cy="72" r="1.6" fill="#d05a3a" opacity="0.8"/><circle cx="117" cy="80" r="1.6" fill="#d05a3a" opacity="0.8"/><circle cx="118" cy="66" r="1.5" fill="#d05a3a" opacity="0.8"/></g><rect x="0" y="121.5" width="122" height="2.5" fill="#16161a"/></g></svg>
<!-- textarea -->
<div class="a" style="left:587px;top:476px;width:505px;height:87px;border:1px solid #d8d7d9;box-sizing:border-box;background:#fff;"></div>
<div class="a" style="left:1075px;top:477px;width:16px;height:68px;background:#ececec;border-left:1px solid #f4f4f4;box-sizing:border-box;"></div>
<div class="a" style="left:1076px;top:495px;width:14px;height:31px;border:1px solid #9a9a9a;border-radius:2px;box-sizing:border-box;background:linear-gradient(to right,#f4f4f4 0,#e4e4e4 50%,#cfcfcf 100%);"></div>
<svg style="left:1078px;top:505px" width="8" height="9" viewBox="0 0 8 9"><path d="M1 1.5H7M1 4.5H7M1 7.5H7" stroke="#4a4a4a" stroke-width="1"/></svg>
<svg style="left:1079px;top:482px" width="7" height="5" viewBox="0 0 7 5"><path d="M0 4.5H7L3.5 0.5Z" fill="#404040"/></svg>
<svg style="left:1079px;top:533px" width="7" height="5" viewBox="0 0 7 5"><path d="M0 0.5H7L3.5 4.5Z" fill="#404040"/></svg>
<svg style="left:1080px;top:552px" width="9" height="9" viewBox="0 0 9 9"><path d="M7.5 1V2M5 4V5M7.5 4V5M2.5 7V8M5 7V8M7.5 7V8" stroke="#a0a0a0" stroke-width="1"/></svg>
<!-- gallery items -->
<div class="a" style="left:499px;top:637px;width:25px;height:15px;background:#f4eeec;border-radius:3px;"></div>
<svg style="left:504px;top:642px" width="15" height="4" viewBox="0 0 15 4"><circle cx="2" cy="2" r="1.6" fill="#1b264f"/><circle cx="7.5" cy="2" r="1.6" fill="#1b264f"/><circle cx="13" cy="2" r="1.6" fill="#1b264f"/></svg>
<div class="a" style="left:587px;top:680px;width:505px;height:1px;background:#e9e9eb;"></div>
<div class="a" style="left:587px;top:732px;width:505px;height:1px;background:#e9e9eb;"></div>
<div class="a" style="left:587px;top:784px;width:505px;height:1px;background:#e9e9eb;"></div>
<svg style="left:593px;top:647px" width="13" height="14" viewBox="0 0 13 14"><path d="M0.5 2.3H12.5M0.5 11.8H12.5" stroke="#4caf50" stroke-width="1.8"/><path d="M1.8 2.3V11.8M11.2 2.3V11.8" stroke="#4caf50" stroke-width="1.3"/><rect x="5.8" y="0.8" width="1.4" height="1.4" fill="#4caf50"/><rect x="5.8" y="12" width="1.4" height="1.4" fill="#4caf50"/></svg>
<svg style="left:593px;top:699px" width="13" height="14" viewBox="0 0 13 14"><path d="M0.5 2.3H12.5M0.5 11.8H12.5" stroke="#4caf50" stroke-width="1.8"/><path d="M1.8 2.3V11.8M11.2 2.3V11.8" stroke="#4caf50" stroke-width="1.3"/><rect x="5.8" y="0.8" width="1.4" height="1.4" fill="#4caf50"/><rect x="5.8" y="12" width="1.4" height="1.4" fill="#4caf50"/></svg>
<svg style="left:593px;top:751px" width="13" height="14" viewBox="0 0 13 14"><path d="M0.5 2.3H12.5M0.5 11.8H12.5" stroke="#4caf50" stroke-width="1.8"/><path d="M1.8 2.3V11.8M11.2 2.3V11.8" stroke="#4caf50" stroke-width="1.3"/><rect x="5.8" y="0.8" width="1.4" height="1.4" fill="#4caf50"/><rect x="5.8" y="12" width="1.4" height="1.4" fill="#4caf50"/></svg>
<!-- copy icon -->
<svg style="left:1034px;top:699px" width="15" height="15" viewBox="0 0 15 15"><path d="M0.6 2.6H6.6L8.6 4.6V14.4H0.6Z" stroke="#1b264f" stroke-width="1.2" fill="#fff"/><path d="M6.3 0.6H12.3L14.4 2.7V12.4H10" stroke="#1b264f" stroke-width="1.2" fill="none"/></svg>
<!-- trash row icon -->
<svg style="left:1067px;top:699px" width="12" height="15" viewBox="0 0 12 15"><rect x="0.5" y="2.2" width="11" height="2" fill="#1b264f"/><path d="M3.8 2.2V0.9H8.2V2.2" stroke="#1b264f" stroke-width="1.2" fill="none"/><rect x="1.8" y="5" width="8.4" height="9.4" fill="#1b264f"/><path d="M4 6.3V13.2M6 6.3V13.2M8 6.3V13.2" stroke="#9aa0b8" stroke-width="0.8"/></svg>
<!-- add content -->
<div class="a" style="left:587px;top:805px;width:505px;height:32px;border:1px dashed #bbbabf;box-sizing:border-box;"></div>
<!-- ellipse 2 -->


<!-- footer buttons -->
<div class="a" style="left:786px;top:1025px;width:82px;height:32px;background:#f3e9e7;border-radius:3px;"></div>
<div class="a" style="left:877px;top:1025px;width:60px;height:32px;background:#f3e9e7;border-radius:3px;"></div>
<div class="a" style="left:946px;top:1025px;width:166px;height:32px;background:#2bc37c;border-radius:3px;"></div>
<div class="a" style="left:1083px;top:1025px;width:1px;height:32px;background:#26a96b;"></div>
<svg style="left:1094px;top:1039px" width="8" height="5" viewBox="0 0 8 5"><path d="M0 4.5H8L4 0.5Z" fill="#fff"/></svg>

<div class='t' style='left:54.00px;top:17.42px;font-size:12.5px;font-weight:400;color:#fbfbfe;letter-spacing:-0.368px;'>Back Street - Studio</div>
<div class='t' style='left:280.00px;top:17.42px;font-size:12.5px;font-weight:400;color:#fbfbfe;letter-spacing:-0.200px;'>Edit: Water Color - Content - backst</div>
<div class='t' style='left:526.50px;top:17.42px;font-size:12.5px;font-weight:400;color:#fbfbfe;letter-spacing:-0.077px;'>Forum - our.umbraco.com</div>
<div class='t' style='left:306.00px;top:52.99px;font-size:13px;font-weight:400;color:#b1b1b3;letter-spacing:0.554px;'>backstreet-studio.<span style="color:#fbfbfe">localtest.me</span>/umbraco/#/content/content/edit/1179</div>
<div class='t' style='left:27.00px;top:98.30px;font-size:15px;font-weight:400;color:#f5c1bc;letter-spacing:0.167px;'>Content</div>
<div class='t' style='left:119.00px;top:98.30px;font-size:15px;font-weight:400;color:#e6e6ec;letter-spacing:0.250px;'>Media</div>
<div class='t' style='left:200.00px;top:98.30px;font-size:15px;font-weight:400;color:#e6e6ec;letter-spacing:0.000px;'>Settings</div>
<div class='t' style='left:293.00px;top:98.30px;font-size:15px;font-weight:400;color:#e6e6ec;letter-spacing:-0.714px;'>Packages</div>
<div class='t' style='left:394.00px;top:98.30px;font-size:15px;font-weight:400;color:#e6e6ec;letter-spacing:-0.450px;'>Users</div>
<div class='t' style='left:471.00px;top:98.30px;font-size:15px;font-weight:400;color:#e6e6ec;letter-spacing:0.067px;'>Members</div>
<div class='t' style='left:573.40px;top:98.30px;font-size:15px;font-weight:400;color:#e6e6ec;letter-spacing:-0.250px;'>Forms</div>
<div class='t' style='left:654.30px;top:98.30px;font-size:15px;font-weight:400;color:#e6e6ec;letter-spacing:-0.130px;'>Translation</div>
<div class='t' style='left:27.40px;top:161.30px;font-size:15px;font-weight:400;-webkit-text-stroke:0.6px #1b264f;color:#1b264f;letter-spacing:0.133px;'>Content</div>
<div class='t' style='left:61.90px;top:216.30px;font-size:15px;font-weight:400;color:#1b264f;letter-spacing:-0.267px;'>Home</div>
<div class='t' style='left:82.20px;top:253.30px;font-size:15px;font-weight:400;color:#1b264f;letter-spacing:0.200px;'>About</div>
<div class='t' style='left:82.00px;top:290.30px;font-size:15px;font-weight:400;color:#1b264f;letter-spacing:-0.350px;'>Galleries</div>
<div class='t' style='left:102.60px;top:327.30px;font-size:15px;font-weight:400;color:#1b264f;letter-spacing:0.090px;'>Water Color</div>
<div class='t' style='left:102.60px;top:364.30px;font-size:15px;font-weight:400;color:#1b264f;letter-spacing:0.000px;'>Acrylic</div>
<div class='t' style='left:81.50px;top:401.30px;font-size:15px;font-weight:400;color:#1b264f;letter-spacing:-0.460px;'>Events</div>
<div class='t' style='left:81.50px;top:438.30px;font-size:15px;font-weight:400;color:#1b264f;letter-spacing:-0.167px;'>Blog</div>
<div class='t' style='left:82.50px;top:475.30px;font-size:15px;font-weight:400;color:#1b264f;letter-spacing:-0.067px;'>Contact</div>
<div class='t' style='left:81.50px;top:512.30px;font-size:15px;font-weight:400;color:#1b264f;letter-spacing:-0.433px;'>Error Page</div>
<div class='t' style='left:82.50px;top:549.30px;font-size:15px;font-weight:400;color:#1b264f;letter-spacing:-0.150px;'>XML Sitemap</div>
<div class='t' style='left:61.00px;top:586.30px;font-size:15px;font-weight:400;color:#1b264f;letter-spacing:-0.300px;'>Recycle Bin</div>
<div class='t' style='left:399.20px;top:160.30px;font-size:15px;font-weight:400;-webkit-text-stroke:0.6px #000000;color:#000000;letter-spacing:0.140px;'>Water Color</div>
<div class='t' style='left:882.40px;top:177.84px;font-size:12px;font-weight:400;color:#1b264f;letter-spacing:0.033px;'>Content</div>
<div class='t' style='left:962.60px;top:177.84px;font-size:12px;font-weight:400;color:#1b264f;letter-spacing:0.433px;'>Info</div>
<div class='t' style='left:1039.60px;top:160.30px;font-size:15px;font-weight:400;color:#1b264f;letter-spacing:-0.100px;'>Actions</div>
<div class='t' style='left:407.50px;top:237.45px;font-size:16px;font-weight:400;-webkit-text-stroke:0.6px #2e2e32;color:#2e2e32;letter-spacing:0.083px;'>Content</div>
<div class='t' style='left:406.50px;top:296.15px;font-size:14px;font-weight:400;-webkit-text-stroke:0.6px #000000;color:#000000;letter-spacing:-0.100px;'>Main Image</div>
<div class='t' style='left:407.50px;top:321.99px;font-size:13px;font-weight:400;color:#1d1d1f;letter-spacing:-0.287px;'>Choose the main image for</div>
<div class='t' style='left:407.50px;top:341.99px;font-size:13px;font-weight:400;color:#1d1d1f;letter-spacing:-0.438px;'>this page</div>
<div class='t' style='left:406.50px;top:483.15px;font-size:14px;font-weight:400;-webkit-text-stroke:0.6px #000000;color:#000000;letter-spacing:0.340px;'>Description</div>
<div class='t' style='left:483.50px;top:483.15px;font-size:14px;font-weight:400;-webkit-text-stroke:0.6px #d42054;color:#d42054;letter-spacing:0.000px;'>*</div>
<div class='t' style='left:406.50px;top:508.99px;font-size:13px;font-weight:400;color:#1d1d1f;letter-spacing:-0.158px;'>Enter a description about</div>
<div class='t' style='left:407.50px;top:528.99px;font-size:13px;font-weight:400;color:#1d1d1f;letter-spacing:-0.227px;'>this gallery</div>
<div class='t' style='left:593.00px;top:483.30px;font-size:15px;font-weight:400;color:#1d1d1f;letter-spacing:-0.017px;'>Bacon ipsum dolor amet jerky ribeye frankfurter, beef ribs meatball</div>
<div class='t' style='left:594.00px;top:503.30px;font-size:15px;font-weight:400;color:#1d1d1f;letter-spacing:0.000px;'>chuck venison flank beef. Buffalo short loin pastrami tri-tip. Cow</div>
<div class='t' style='left:593.00px;top:523.30px;font-size:15px;font-weight:400;color:#1d1d1f;letter-spacing:-0.029px;'>burgdoggen ball tip pork loin kevin ground round andouille corned beef.</div>
<div class='t' style='left:593.00px;top:543.30px;font-size:15px;font-weight:400;color:#1d1d1f;letter-spacing:-0.052px;'>Ball tip jerky short loin pastrami biltong capicola picanha</div>
<div class='t' style='left:587.50px;top:569.30px;font-size:15px;font-weight:400;color:#1d1d1f;letter-spacing:-0.029px;'><b>9</b> characters left.</div>
<div class='t' style='left:407.50px;top:636.55px;font-size:14px;font-weight:400;-webkit-text-stroke:0.6px #000000;color:#000000;letter-spacing:-0.167px;'>Gallery Items</div>
<div class='t' style='left:406.50px;top:662.29px;font-size:13px;font-weight:400;color:#1d1d1f;letter-spacing:-0.130px;'>Enter the details about this</div>
<div class='t' style='left:406.50px;top:682.19px;font-size:13px;font-weight:400;color:#1d1d1f;letter-spacing:-0.125px;'>piece</div>
<div class='t' style='left:621.80px;top:647.30px;font-size:15px;font-weight:400;color:#1b264f;letter-spacing:-0.083px;'>Flowers</div>
<div class='t' style='left:622.80px;top:699.00px;font-size:15px;font-weight:400;color:#3759a6;letter-spacing:-0.600px;'>Waves</div>
<div class='t' style='left:621.80px;top:750.80px;font-size:15px;font-weight:400;color:#1b264f;letter-spacing:-0.036px;'>More Flowers</div>
<div class='t' style='left:798.00px;top:812.60px;font-size:15px;font-weight:400;-webkit-text-stroke:0.6px #1b264f;color:#1b264f;letter-spacing:0.150px;'>Add content</div>
<div class='t' style='left:385.90px;top:1030.35px;font-size:14px;font-weight:400;color:#515054;letter-spacing:-0.400px;text-decoration:underline;'>Home</div>
<div class='t' style='left:428.50px;top:1030.35px;font-size:14px;font-weight:400;color:#bbbabf;letter-spacing:0.000px;'>/</div>
<div class='t' style='left:438.40px;top:1030.35px;font-size:14px;font-weight:400;color:#515054;letter-spacing:-0.712px;text-decoration:underline;'>Galleries</div>
<div class='t' style='left:493.50px;top:1030.35px;font-size:14px;font-weight:400;color:#bbbabf;letter-spacing:0.000px;'>/</div>
<div class='t' style='left:504.70px;top:1030.35px;font-size:14px;font-weight:400;color:#515054;letter-spacing:-0.570px;'>Water Color</div>
<div class='t' style='left:800.30px;top:1032.18px;font-size:15.5px;font-weight:400;-webkit-text-stroke:0.6px #1b264f;color:#1b264f;letter-spacing:-0.317px;'>Preview</div>
<div class='t' style='left:892.00px;top:1032.18px;font-size:15.5px;font-weight:400;-webkit-text-stroke:0.6px #1b264f;color:#1b264f;letter-spacing:-1.600px;'>Save</div>
<div class='t' style='left:959.70px;top:1032.18px;font-size:15.5px;font-weight:400;-webkit-text-stroke:0.6px #ffffff;color:#ffffff;letter-spacing:-0.500px;'>Save and publish</div>
<div class="a" style="left:440px;top:12px;width:32px;height:22px;background:linear-gradient(to right,rgba(50,50,52,0),#323234 90%);"></div>
<svg style="left:0;top:0" width="1152" height="1072"><ellipse cx="133.2" cy="333.8" rx="110.3" ry="60.9" stroke="#3b40c9" stroke-width="4.8" fill="none" shape-rendering="crispEdges"/></svg>
<svg style="left:0;top:0" width="1152" height="1072"><ellipse cx="581.2" cy="704.9" rx="180.7" ry="92.7" stroke="#3b40c9" stroke-width="4.8" fill="none" shape-rendering="crispEdges"/></svg>
</body></html>
